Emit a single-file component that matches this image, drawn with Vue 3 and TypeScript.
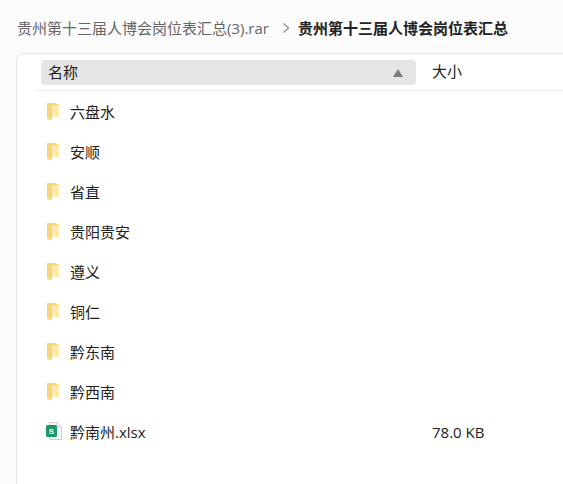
<template>
  <div class="page">
    <nav class="crumbs">
      <span class="crumb">贵州第十三届人博会岗位表汇总(3).rar</span>
      <svg class="chevron" width="8" height="10" viewBox="0 0 8 10">
        <path d="M1.5 0.5 L6.5 5 L1.5 9.5" fill="none" stroke="#8a8a8a" stroke-width="1.2" />
      </svg>
      <span class="crumb current">贵州第十三届人博会岗位表汇总</span>
    </nav>
    <section class="panel">
      <div class="head">
        <div class="col-name">
          <span>名称</span>
          <svg width="10" height="8" viewBox="0 0 10 8"><path d="M5 0 L10 8 L0 8 Z" fill="#7d7d7d" /></svg>
        </div>
        <div class="col-size">大小</div>
      </div>
      <div v-for="item in items" :key="item.name" class="row">
        <svg v-if="item.type === 'folder'" class="icon" width="16" height="18" viewBox="0 0 16 18">
          <path d="M1 1 H9 L13 3 V15 H6 V17.5 H3 L1 16 Z" fill="#f3d06a" />
          <path d="M6 3 H13 V15 H6 Z" fill="#fce9ac" />
          <path d="M1 1 H8 L6 3 V17.5 H3 L1 16 Z" fill="#f5d67c" />
        </svg>
        <svg v-else class="icon" width="16" height="18" viewBox="0 0 16 18">
          <path d="M3.5 0.5 H11 L15.5 5 V17.5 H3.5 Z" fill="#fbfbfb" stroke="#cfcfcf" />
          <path d="M11 0.5 V5 H15.5" fill="#efefef" stroke="#cfcfcf" />
          <rect x="0" y="3" width="11" height="12" rx="1.5" fill="#1a9a64" />
          <text x="5.5" y="12" class="sheet-s">S</text>
        </svg>
        <span class="name">{{ item.name }}</span>
        <span v-if="item.size" class="size">{{ item.size }}</span>
      </div>
    </section>
  </div>
</template>

<script setup lang="ts">
type Item = { name: string; type: "folder" | "sheet"; size?: string };

const items: Item[] = [
  { name: "六盘水", type: "folder" },
  { name: "安顺", type: "folder" },
  { name: "省直", type: "folder" },
  { name: "贵阳贵安", type: "folder" },
  { name: "遵义", type: "folder" },
  { name: "铜仁", type: "folder" },
  { name: "黔东南", type: "folder" },
  { name: "黔西南", type: "folder" },
  { name: "黔南州.xlsx", type: "sheet", size: "78.0 KB" },
];
</script>

<style>
html,
body {
  margin: 0;
  background: #fff;
  overflow: hidden;
}
</style>

<style scoped>
.page {
  width: 563px;
  height: 484px;
  padding-left: 16px;
  box-sizing: border-box;
  overflow: hidden;
  background: #fcfcfc;
  font-family: "Open Sans", "Noto Sans CJK SC", sans-serif;
  font-size: 15px;
  color: #222;
}
.crumbs {
  display: flex;
  align-items: center;
  height: 53px;
  padding-top: 2px;
  box-sizing: border-box;
  padding-left: 1px;
}
.crumb {
  color: #666;
  line-height: 20px;
  white-space: nowrap;
}
.chevron {
  margin: 0 8px 0 13px;
}
.current {
  color: #222;
  font-weight: 700;
}
.panel {
  height: 431px;
  background: #fff;
  border-top: 1px solid #e5e5e5;
  border-left: 1px solid #e5e5e5;
  border-top-left-radius: 8px;
  padding-left: 19px;
  box-sizing: border-box;
}
.head {
  display: flex;
  height: 37px;
  padding: 6px 0 5px 5px;
  box-sizing: border-box;
  border-bottom: 1px solid #eee;
}
.col-name {
  width: 375px;
  height: 25px;
  padding: 0 13px 0 7px;
  box-sizing: border-box;
  display: flex;
  align-items: center;
  justify-content: space-between;
  background: #e5e5e5;
  border-radius: 4px;
}
.col-name span {
  line-height: 24px;
  margin-top: -1px;
}
.col-size {
  margin-left: 16px;
  line-height: 23px;
}
.row {
  display: flex;
  align-items: center;
  height: 40px;
  padding-left: 10px;
}
.row:first-of-type {
  margin-top: 2px;
}
.icon {
  flex: none;
}
.name {
  width: 362px;
  flex: none;
  margin-left: 8px;
  white-space: nowrap;
  line-height: 20px;
  padding-top: 2px;
}
.size {
  flex: none;
  white-space: nowrap;
  line-height: 20px;
  padding-top: 2px;
}
.sheet-s {
  font-family: "Liberation Sans", sans-serif;
  font-size: 8px;
  font-weight: 700;
  fill: #fff;
  text-anchor: middle;
}
</style>
